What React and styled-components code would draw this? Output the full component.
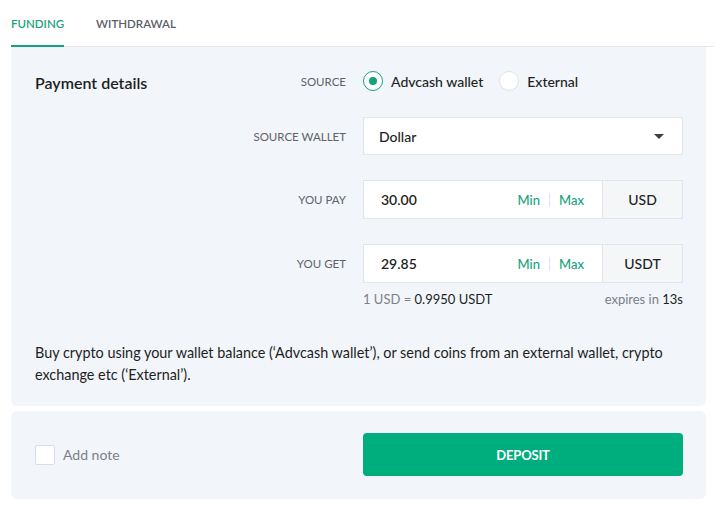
import styled, { createGlobalStyle } from "styled-components";

const GlobalStyle = createGlobalStyle`
  body {
    margin: 0;
    background: #ffffff;
    font-family: Lato, "Open Sans", sans-serif;
    color: #1c1f24;
  }
`;

const Page = styled.div`
  width: 714px;
  padding: 0 8px 0 11px;
  box-sizing: border-box;
`;

const Tabs = styled.div`
  display: flex;
  gap: 32px;
  border-bottom: 1px solid #e3e6ea;
  margin-right: -8px;
`;

const Tab = styled.div`
  padding: 17px 0 15px;
  font-size: 11.5px;
  font-weight: 600;
  color: ${(p) => (p.$active ? "#17a27e" : "#5b6068")};
  border-bottom: 2px solid ${(p) => (p.$active ? "#17a27e" : "transparent")};
  margin-bottom: -1px;
`;

const Panel = styled.div`
  background: #f2f5f9;
  border-radius: ${(p) => (p.$top ? "0 0 6px 6px" : "6px")};
  padding: ${(p) => p.$pad};
  margin-top: ${(p) => p.$mt || "0"};
`;

const Grid = styled.div`
  display: grid;
  grid-template-columns: 150px 144px 320px;
  column-gap: 17px;
  row-gap: 25px;
  align-items: center;
`;

const Title = styled.div`
  font-size: 16px;
  font-weight: 600;
  color: #1c1f24;
  margin-top: 2px;
`;

const Label = styled.div`
  grid-column: 2;
  text-align: right;
  font-size: 11.5px;
  color: #5e636b;
  text-transform: uppercase;
  white-space: nowrap;
`;

const Field = styled.div`
  grid-column: 3;
`;

const RadioRow = styled.div`
  display: flex;
  align-items: center;
  gap: 8px;
  height: 22px;
`;

const Radio = styled.span`
  width: 20px;
  height: 20px;
  box-sizing: border-box;
  border-radius: 50%;
  background: #fff;
  border: 1px solid ${(p) => (p.$on ? "#17a27e" : "#dfe2e6")};
  display: flex;
  align-items: center;
  justify-content: center;
  margin-left: ${(p) => p.$ml || "0"};
  &::after {
    content: "";
    width: 8px;
    height: 8px;
    border-radius: 50%;
    background: ${(p) => (p.$on ? "#17a27e" : "transparent")};
  }
`;

const RadioText = styled.span`
  font-size: 14px;
  font-weight: 500;
  color: #1c1f24;
`;

const Select = styled.div`
  height: 38px;
  box-sizing: border-box;
  background: #fff;
  border: 1px solid #e1e4e8;
  display: flex;
  align-items: center;
  justify-content: space-between;
  padding: 0 18px 0 15px;
  font-size: 14px;
  font-weight: 500;
`;

const Caret = styled.span`
  width: 0;
  height: 0;
  border-left: 5px solid transparent;
  border-right: 5px solid transparent;
  border-top: 5px solid #3c4046;
`;

const InputGroup = styled.div`
  height: 39px;
  box-sizing: border-box;
  background: #fff;
  border: 1px solid #e1e4e8;
  display: flex;
  align-items: center;
`;

const Amount = styled.div`
  flex: 1;
  padding-left: 17px;
  font-size: 14px;
  font-weight: 600;
`;

const Link = styled.span`
  color: #17a27e;
  font-size: 13px;
  font-weight: 500;
`;

const Divider = styled.span`
  width: 1px;
  height: 14px;
  background: #e1e4e8;
  margin: 0 9px;
`;

const Unit = styled.div`
  width: 79px;
  height: 100%;
  margin-left: 18px;
  border-left: 1px solid #e1e4e8;
  background: #f5f6f8;
  display: flex;
  align-items: center;
  justify-content: center;
  font-size: 14px;
  font-weight: 500;
`;

const Rate = styled.div`
  grid-column: 3;
  display: flex;
  justify-content: space-between;
  font-size: 13px;
  color: #7b8088;
  margin-top: -18px;
`;

const Dark = styled.span`
  color: #1c1f24;
`;

const Note = styled.p`
  margin: 34px 0 0;
  font-size: 14.4px;
  line-height: 22px;
  color: #1c1f24;
`;

const Footer = styled.div`
  display: grid;
  grid-template-columns: 328px 320px;
  align-items: center;
`;

const Check = styled.label`
  display: flex;
  align-items: center;
  gap: 8px;
  font-size: 14px;
  color: #7b8088;
`;

const Box = styled.span`
  width: 20px;
  height: 20px;
  box-sizing: border-box;
  border: 1px solid #dadde2;
  background: #fff;
  border-radius: 2px;
`;

const Button = styled.button`
  height: 43px;
  border: none;
  border-radius: 4px;
  background: #00ad7c;
  color: #fff;
  font-family: inherit;
  font-size: 13px;
  font-weight: 700;
  letter-spacing: -0.2px;
`;

function AmountRow({ label, value, unit }) {
  return (
    <>
      <Label>{label}</Label>
      <Field>
        <InputGroup>
          <Amount>{value}</Amount>
          <Link>Min</Link>
          <Divider />
          <Link>Max</Link>
          <Unit>{unit}</Unit>
        </InputGroup>
      </Field>
    </>
  );
}

export default function App() {
  return (
    <Page>
      <GlobalStyle />
      <Tabs>
        <Tab $active>FUNDING</Tab>
        <Tab>WITHDRAWAL</Tab>
      </Tabs>
      <Panel $top $pad="23px 24px 20px">
        <Grid>
          <Title>Payment details</Title>
          <Label>Source</Label>
          <Field>
            <RadioRow>
              <Radio $on />
              <RadioText>Advcash wallet</RadioText>
              <Radio $ml="8px" />
              <RadioText>External</RadioText>
            </RadioRow>
          </Field>
          <Label>Source wallet</Label>
          <Field>
            <Select>
              Dollar
              <Caret />
            </Select>
          </Field>
          <AmountRow label="You pay" value="30.00" unit="USD" />
          <AmountRow label="You get" value="29.85" unit="USDT" />
          <Rate>
            <span>
              1 USD = <Dark>0.9950 USDT</Dark>
            </span>
            <span>
              expires in <Dark>13s</Dark>
            </span>
          </Rate>
        </Grid>
        <Note>
          Buy crypto using your wallet balance (‘Advcash wallet’), or send coins from an
          external wallet, crypto exchange etc (‘External’).
        </Note>
      </Panel>
      <Panel $pad="22px 24px 23px" $mt="5px">
        <Footer>
          <Check>
            <Box />
            Add note
          </Check>
          <Button>DEPOSIT</Button>
        </Footer>
      </Panel>
    </Page>
  );
}
